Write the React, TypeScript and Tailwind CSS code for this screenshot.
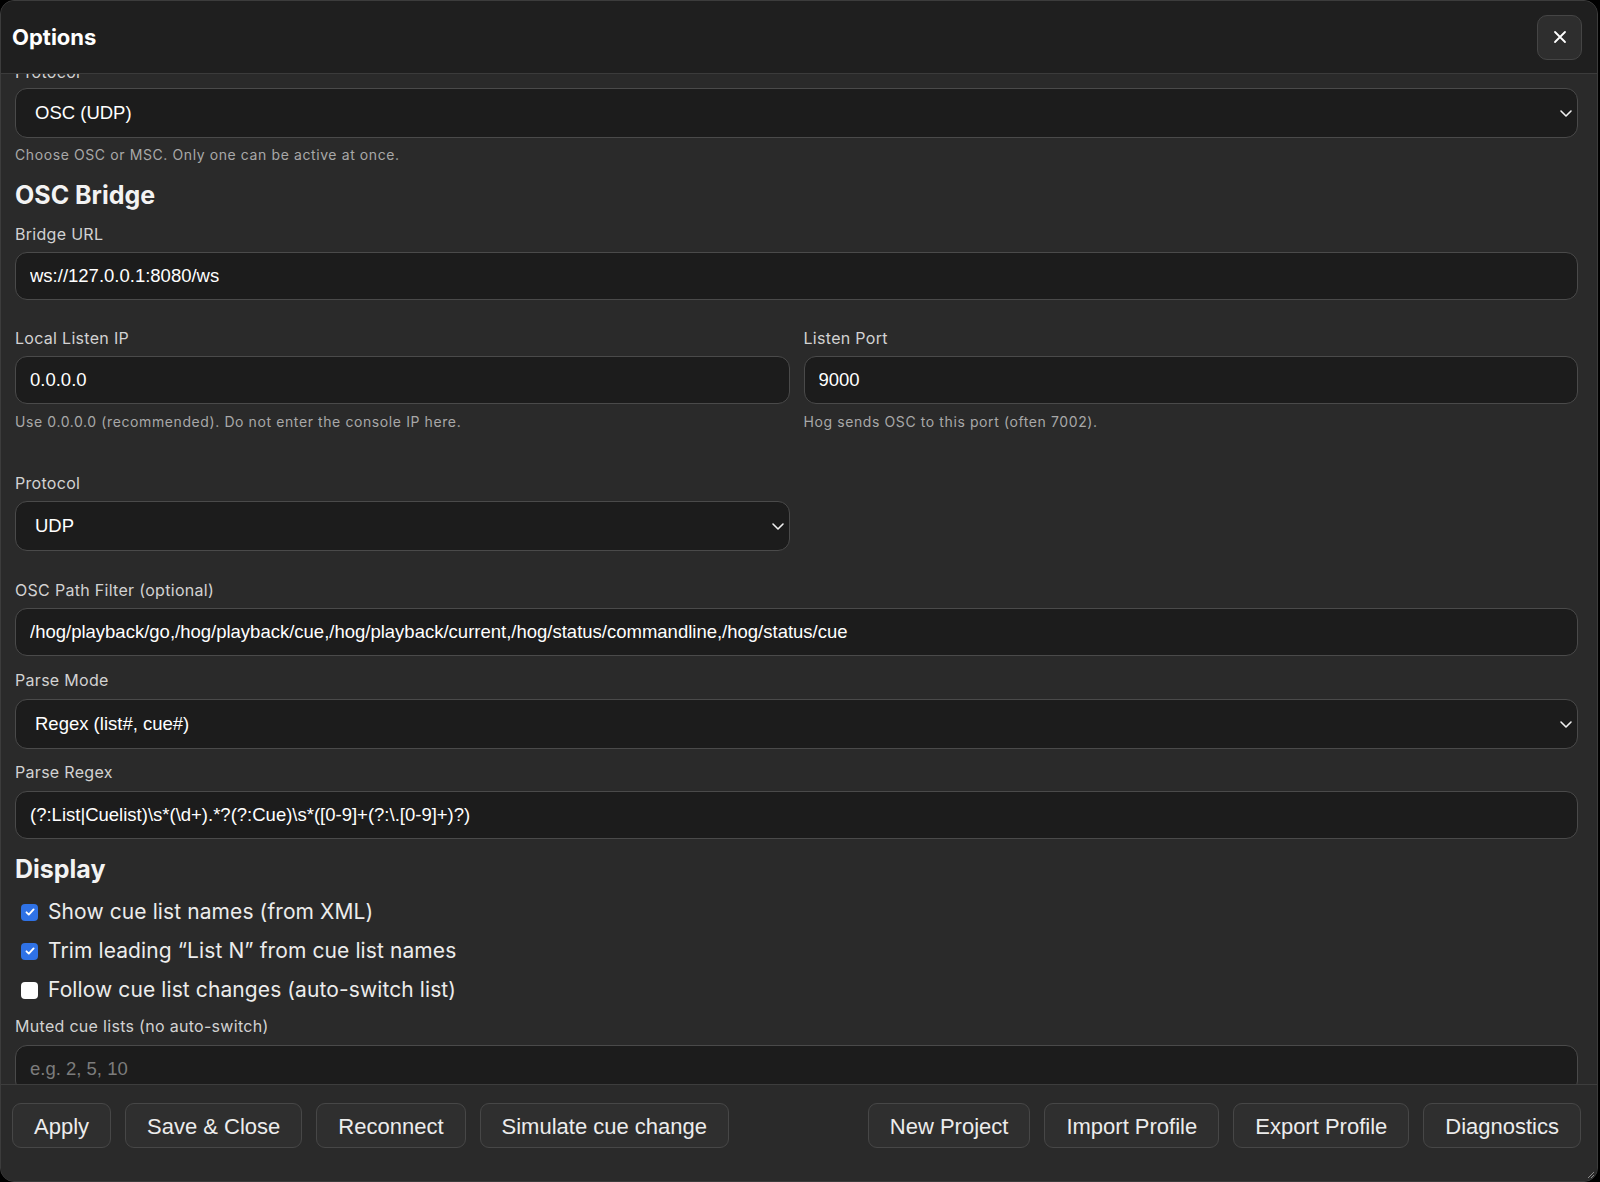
import { useState } from "react";

const SANS = "font-['Inter','Noto_Sans',sans-serif]";
const HELV = "font-['Liberation_Sans','Arial',sans-serif]";

const inputCls = `w-full h-[48px] rounded-[12px] border-[1.5px] border-[#4a4a4a] bg-[#1c1c1c] px-[14px] text-[18.5px] text-white placeholder:text-[#7c7c7c] outline-none ${HELV}`;

function Label({ children, className = "" }: { children: React.ReactNode; className?: string }) {
  return (
    <div className={`text-[16px] leading-[20px] tracking-[0.3px] text-[#d2d2d2] ${className}`}>{children}</div>
  );
}

function Help({ children, className = "" }: { children: React.ReactNode; className?: string }) {
  return (
    <div className={`text-[14px] leading-[20px] tracking-[0.6px] text-[#a8a8a8] ${className}`}>{children}</div>
  );
}

function Select({ value, options, className = "" }: { value: string; options: string[]; className?: string }) {
  return (
    <div className={`relative h-[50px] ${className}`}>
      <select
        defaultValue={value}
        className={`h-full w-full appearance-none rounded-[12px] border-[1.5px] border-[#4a4a4a] bg-[#1c1c1c] pl-[19px] pr-10 text-[18.5px] text-white outline-none ${HELV}`}
      >
        {options.map((o) => (
          <option key={o}>{o}</option>
        ))}
      </select>
      {/* chevron */}
      <svg
        className="pointer-events-none absolute right-[4px] top-1/2 -translate-y-1/2"
        width="16" height="16" viewBox="0 0 16 16" fill="none"
      >
        <path d="M3 6l5 5 5-5" stroke="#f0f0f0" strokeWidth="1.6" strokeLinecap="round" strokeLinejoin="round" />
      </svg>
    </div>
  );
}

function Check({ checked, label }: { checked: boolean; label: string }) {
  const [on, setOn] = useState(checked);
  return (
    <label className="flex h-[28px] items-center gap-[10px] pl-[6px] cursor-pointer" onClick={() => setOn(!on)}>
      {on ? (
        <span className="flex h-[17px] w-[17px] items-center justify-center rounded-[4px] bg-[#2f72e6]">
          <svg width="12" height="12" viewBox="0 0 12 12" fill="none">
            <path d="M2.5 6.3l2.3 2.3L9.6 3.4" stroke="white" strokeWidth="1.9" strokeLinecap="round" strokeLinejoin="round" />
          </svg>
        </span>
      ) : (
        <span className="h-[17px] w-[17px] rounded-[4px] bg-white" />
      )}
      <span className="text-[21px] leading-[28px] tracking-[0.1px] text-[#ececec]">{label}</span>
    </label>
  );
}

function Btn({ children }: { children: React.ReactNode }) {
  return (
    <button
      type="button"
      className={`h-[45px] rounded-[9px] border border-[#474747] bg-[#2f2f2f] px-[21px] pt-[2px] text-[22px] text-[#ececec] ${HELV}`}
    >
      {children}
    </button>
  );
}

export default function App() {
  return (
    <div className={`h-[1182px] w-[1600px] bg-black ${SANS}`}>
      <div className="flex h-full w-[1598px] flex-col overflow-hidden rounded-[14px] border border-[#3c3c3c] bg-[#2a2a2a]">
        {/* ヘッダー */}
        <div className="flex h-[73px] shrink-0 items-center justify-between border-b border-[#3b3b3b] bg-[#1f1f1f] pl-[11px] pr-[15px]">
          <h1 className="text-[22px] font-bold text-white">Options</h1>
          <button
            type="button"
            className="flex h-[45px] w-[45px] items-center justify-center rounded-[10px] border border-[#454545] bg-[#2e2e2e]"
          >
            <svg width="14" height="14" viewBox="0 0 14 14" fill="none">
              <path d="M2 2l10 10M12 2L2 12" stroke="white" strokeWidth="1.8" strokeLinecap="round" />
            </svg>
          </button>
        </div>

        {/* 本文 (スクロール済み) */}
        <div className="flex-1 overflow-hidden pl-[14px] pr-[19px]">
          <Label className="mt-[-12px]">Protocol</Label>
          <Select className="mt-[6px]" value="OSC (UDP)" options={["OSC (UDP)", "MSC"]} />
          <Help className="mt-[7px]">Choose OSC or MSC. Only one can be active at once.</Help>

          <h2 className="mt-[14px] text-[25px] font-bold leading-[32px] text-[#f3f3f3]">OSC Bridge</h2>
          <Label className="mt-[13px]">Bridge URL</Label>
          <input className={`${inputCls} mt-[8px]`} defaultValue="ws://127.0.0.1:8080/ws" />

          <div className="mt-[28px] grid grid-cols-2 gap-x-[14px]">
            <div>
              <Label>Local Listen IP</Label>
              <input className={`${inputCls} mt-[8px]`} defaultValue="0.0.0.0" />
              <Help className="mt-[8px]">Use 0.0.0.0 (recommended). Do not enter the console IP here.</Help>
            </div>
            <div>
              <Label>Listen Port</Label>
              <input className={`${inputCls} mt-[8px]`} defaultValue="9000" />
              <Help className="mt-[8px]">Hog sends OSC to this port (often 7002).</Help>
            </div>
          </div>

          <div className="mt-[41px] grid grid-cols-2 gap-x-[14px]">
            <div>
              <Label>Protocol</Label>
              <Select className="mt-[8px]" value="UDP" options={["UDP", "TCP"]} />
            </div>
          </div>

          <Label className="mt-[29px]">OSC Path Filter (optional)</Label>
          <input
            className={`${inputCls} mt-[8px]`}
            defaultValue="/hog/playback/go,/hog/playback/cue,/hog/playback/current,/hog/status/commandline,/hog/status/cue"
          />

          <Label className="mt-[14px]">Parse Mode</Label>
          <Select className="mt-[9px]" value="Regex (list#, cue#)" options={["Regex (list#, cue#)", "Path"]} />

          <Label className="mt-[13px]">Parse Regex</Label>
          <input
            className={`${inputCls} mt-[9px]`}
            defaultValue={String.raw`(?:List|Cuelist)\s*(\d+).*?(?:Cue)\s*([0-9]+(?:\.[0-9]+)?)`}
          />

          <h2 className="mt-[14px] text-[25px] font-bold leading-[32px] text-[#f3f3f3]">Display</h2>
          <div className="mt-[13px] flex flex-col gap-[11px]">
            <Check checked label="Show cue list names (from XML)" />
            <Check checked label="Trim leading “List N” from cue list names" />
            <Check checked={false} label="Follow cue list changes (auto-switch list)" />
          </div>

          <Label className="mt-[12px]">Muted cue lists (no auto-switch)</Label>
          <input className={`${inputCls} mt-[9px]`} placeholder="e.g. 2, 5, 10" />
        </div>

        {/* フッター */}
        <div className="relative flex h-[97px] shrink-0 items-start justify-between border-t border-[#3d3d3d] bg-[#2a2a2a] pl-[11px] pr-[16px] pt-[18px]">
          <div className="flex gap-[14px]">
            <Btn>Apply</Btn>
            <Btn>Save &amp; Close</Btn>
            <Btn>Reconnect</Btn>
            <Btn>Simulate cue change</Btn>
          </div>
          <div className="flex gap-[14px]">
            <Btn>New Project</Btn>
            <Btn>Import Profile</Btn>
            <Btn>Export Profile</Btn>
            <Btn>Diagnostics</Btn>
          </div>
          {/* リサイズグリップ */}
          <svg className="absolute bottom-[2px] right-[2px]" width="10" height="10" viewBox="0 0 10 10">
            <path d="M9 3L3 9M9 6L6 9" stroke="#8a8a8a" strokeWidth="1" />
          </svg>
        </div>
      </div>
    </div>
  );
}
